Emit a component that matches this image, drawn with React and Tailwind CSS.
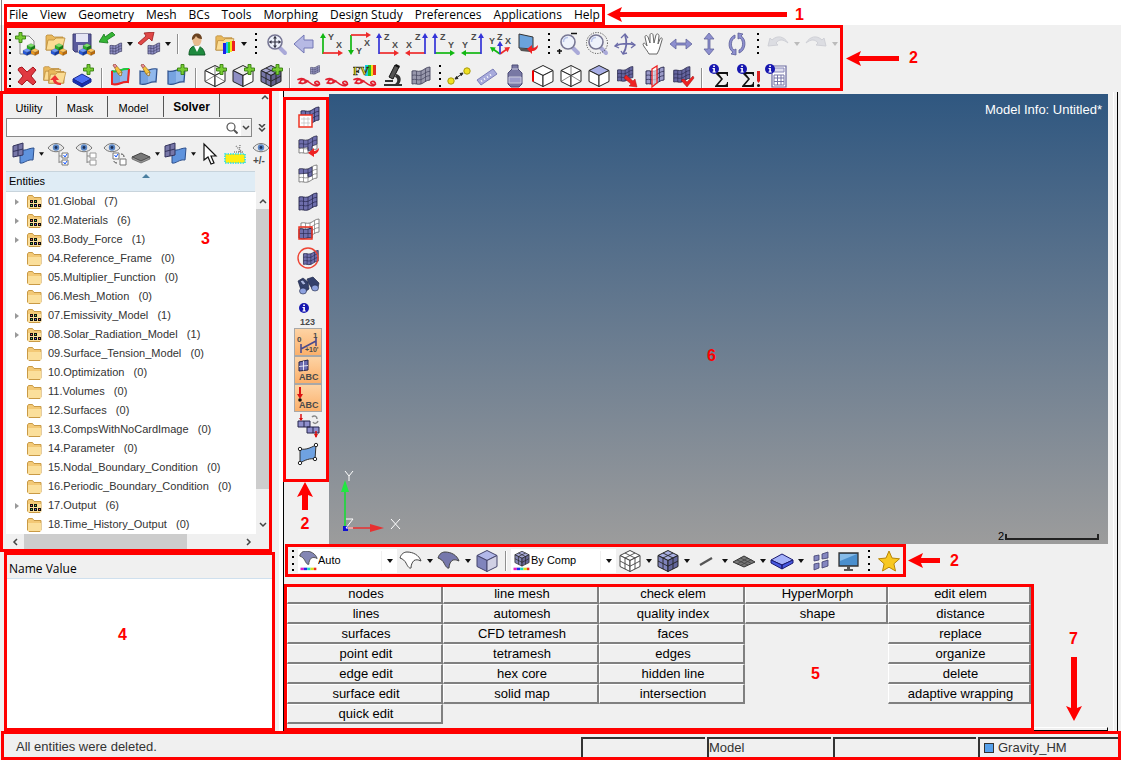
import React, { useState } from 'react';
import clsx from 'clsx';

const MENUS = ['File', 'View', 'Geometry', 'Mesh', 'BCs', 'Tools', 'Morphing', 'Design Study', 'Preferences', 'Applications', 'Help'];

const ENTITIES = [
  ['01.Global', 7], ['02.Materials', 6], ['03.Body_Force', 1], ['04.Reference_Frame', 0],
  ['05.Multiplier_Function', 0], ['06.Mesh_Motion', 0], ['07.Emissivity_Model', 1],
  ['08.Solar_Radiation_Model', 1], ['09.Surface_Tension_Model', 0], ['10.Optimization', 0],
  ['11.Volumes', 0], ['12.Surfaces', 0], ['13.CompsWithNoCardImage', 0], ['14.Parameter', 0],
  ['15.Nodal_Boundary_Condition', 0], ['16.Periodic_Boundary_Condition', 0], ['17.Output', 6],
  ['18.Time_History_Output', 0],
];

const PANELS = [
  ['nodes', 'line mesh', 'check elem', 'HyperMorph', 'edit elem'],
  ['lines', 'automesh', 'quality index', 'shape', 'distance'],
  ['surfaces', 'CFD tetramesh', 'faces', '', 'replace'],
  ['point edit', 'tetramesh', 'edges', '', 'organize'],
  ['edge edit', 'hex core', 'hidden line', '', 'delete'],
  ['surface edit', 'solid map', 'intersection', '', 'adaptive wrapping'],
  ['quick edit', '', '', '', ''],
];

const PURPLE = '#8f8fc4';
const DARK = '#25254a';

/* ---------- drawing helpers ---------- */

function Svg({ size = 24, children }) {
  return (
    <svg width={size} height={size} viewBox="0 0 24 24" fill="none" className="shrink-0" aria-hidden="true">
      {children}
    </svg>
  );
}

function Plus({ x = 13, y = 0 }) {
  return (
    <path transform={`translate(${x} ${y})`} d="M4 .5h3V4h3.500v3H7v3.500H4V7H.5V4H4z" fill="#77cc33" stroke="#35800f" strokeWidth=".9" />
  );
}

function Block({ x, y, s = 1, top, side, dark }) {
  return (
    <g transform={`translate(${x} ${y}) scale(${s})`} stroke="#222" strokeOpacity=".35" strokeWidth=".5">
      <path d="M0 2.500 4 .5l4 2-4 2z" fill={top} />
      <path d="M0 2.500v3l4 2v-3z" fill={side} />
      <path d="M8 2.500v3l-4 2v-3z" fill={dark} />
    </g>
  );
}

function Blocks() {
  return (
    <>
      <Block x={12} y={11} top="#7be36a" side="#27b327" dark="#128012" />
      <Block x={8} y={16} top="#6d9bff" side="#2458e0" dark="#123aa5" />
      <Block x={16} y={16} top="#ffc75e" side="#f09a1c" dark="#bf6c08" />
    </>
  );
}

function FolderShape({ x = 0, y = 0, s = 1 }) {
  return (
    <g transform={`translate(${x} ${y}) scale(${s})`} stroke="#b98a3a" strokeWidth=".8">
      <path d="M3 18V4l1-1h5l2 2h9v13z" fill="#e9b95c" />
      <path d="M3 18 5 8h6l2-2h9l-3 12z" fill="#fbdc94" />
    </g>
  );
}

// wavy shell patch with mesh lines over it
function Patch({ x = 0, y = 0, s = 1, fill = PURPLE, line = DARK, grid = true }) {
  return (
    <g transform={`translate(${x} ${y}) scale(${s})`} stroke={line} strokeWidth=".9">
      <path d="M3 7c4-1 5 1 9 0 3-1 5-4 9-4v13c-4 0-6 3-9 4-4 1-5-1-9 0z" fill={fill} />
      {grid && (
        <path d="M3 11.300c4-1 5 1 9 0 3-1 5-4 9-4M3 15.600c4-1 5 1 9 0 3-1 5-4 9-4M7.500 7v13M12 7v13M16.500 4.700v13" strokeWidth=".7" />
      )}
    </g>
  );
}

function Sheet({ lines = '#2c4f8c' }) {
  return (
    <>
      <path d="M3 7c6 2 9-3 17-2l-1 13c-7-1-9 4-16 2z" fill="#76a3e0" stroke={lines} strokeWidth="1.200" />
      <path d="M11 7c3-1 5-2 8-1.500l-1 11c-3 0-5 1-7 2z" fill="#a4c6f2" fillOpacity=".6" />
    </>
  );
}

function Pencil({ x = 0, y = 0 }) {
  return (
    <g transform={`translate(${x} ${y})`} strokeWidth=".6">
      <path d="m4 1 2-1 7 8-1 4-3-2z" fill="#f4c33c" stroke="#8a6210" />
      <path d="m4 1 2-1 2 2-2 2z" fill="#ea8f9a" stroke="#a0505a" />
      <path d="m9 10 4-2-1 4z" fill="#f6e3c0" stroke="#8a6210" />
    </g>
  );
}

function IsoBox({ left = '#fff', right = '#fff', top = '#fff', grid, inner, redEdge, line = '#222' }) {
  return (
    <g stroke={line} strokeWidth="1" strokeLinejoin="round">
      <path d="m12 1.500 10 5-10 5-10-5z" fill={top} />
      <path d="m2 6.500 10 5v11l-10-5z" fill={left} />
      <path d="m22 6.500-10 5v11l10-5z" fill={right} />
      {inner && <path d="M12 1.500v10M2 17.500l10-6 10 6" strokeWidth=".7" stroke="#555" />}
      {grid && (
        <path d="M7 9v11M17 9v11M2 12l10 5.200L22 12M7 4l10 5M17 4 7 9" strokeWidth=".9" />
      )}
      {redEdge && <path d="M2 6.500v11" stroke="#e00" strokeWidth="2" />}
    </g>
  );
}

function Eye({ x = 0, y = 0 }) {
  return (
    <g transform={`translate(${x} ${y})`}>
      <path d="M0 5c4-6 12-6 16 0-4 5-12 5-16 0z" fill="#e6e6e6" stroke="#777" />
      <circle cx="8" cy="4.500" r="3.200" fill="#5a87c6" />
      <circle cx="8" cy="4.500" r="1.400" fill="#1d2f55" />
    </g>
  );
}

function Magnifier({ children }) {
  return (
    <>
      <path d="m15 15 6 6" stroke="#a9a9d8" strokeWidth="4" strokeLinecap="round" />
      <circle cx="11" cy="10" r="7" fill="#eef2fb" stroke="#777794" strokeWidth="1.600" />
      {children || <path d="M6.500 10c0-3 2-4.500 4.500-4.500" stroke="#b9c4ea" strokeWidth="1.500" />}
    </>
  );
}

function Info({ x = 0, y = 0 }) {
  return (
    <g transform={`translate(${x} ${y})`}>
      <circle cx="5" cy="5" r="5" fill="#1717b0" />
      <path d="M4.200 1.500h1.700v1.500H4.200zM3.500 4h2.400v3.500h.8v1H3.500v-1h.8V5h-.8z" fill="#fff" />
    </g>
  );
}

function Letter({ x, y, children, size = 9, color = '#4a4a4a' }) {
  return <text x={x} y={y} fontSize={size} fontWeight="700" fontFamily="Liberation Sans, sans-serif" fill={color}>{children}</text>;
}

function Arrow({ x1, y1, x2, y2, color }) {
  const a = Math.atan2(y2 - y1, x2 - x1);
  const p = (d, w) => `${x2 - d * Math.cos(a) + w * Math.sin(a)} ${y2 - d * Math.sin(a) - w * Math.cos(a)}`;
  return (
    <>
      <path d={`M${x1} ${y1}L${p(4, 0)}`} stroke={color} strokeWidth="1.700" />
      <path d={`M${p(5, 3)}L${x2} ${y2}L${p(5, -3)}z`} fill={color} />
    </>
  );
}

const G = '#12b812';
const R = '#ee2b2b';
const B = '#3434d8';

function Squiggle() {
  return (
    <path d="M1 15.500c5-2 8 0 7 2.500s-6 1.500-4.500-1 6-1 9 1.500 7 4 9 2.500 0-4-2.500-3.500-1 3.500 3.500 3M2 19c4 1 7 0 9-2" stroke="#e01e2e" strokeWidth="1.600" strokeLinecap="round" />
  );
}

function Shell({ fill }) {
  return (
    <path d="M1 9c1-4 4-6 7-6 6 0 12 3 14 9-3-1.500-5-1.500-7-.5-2 2-3 4.500-3 7.500-2 1-4-3-5-5S4 10 1 9z" fill={fill} stroke="#444" strokeWidth="1" />
  );
}

function Spectrum() {
  return (
    <>
      <path d="M3 20h4v3H3z" fill="#e020c0" />
      <path d="M7 20h4v3H7z" fill="#2030e8" />
      <path d="M11 20h4v3h-4z" fill="#20d8c0" />
      <path d="M15 20h4v3h-4z" fill="#d8e020" />
      <path d="M19 20h3v3h-3z" fill="#f03020" />
    </>
  );
}

/* ---------- icons by name ---------- */

const ICONS = {
  newModel: <><path d="M5 4h9l5 5v13H5z" fill="#f6f6f6" stroke="#888" /><Plus x={0} y={0} /><Blocks /></>,
  open: <><FolderShape /><Blocks /></>,
  save: <><path d="M2 2h18v18H4l-2-2z" fill="#5a5a9c" stroke="#3c3c70" /><path d="M5 2h12v8H5z" fill="#e4e4f4" /><path d="M7 13h9v7H7z" fill="#c9c9e0" /><Blocks /></>,
  importFile: <><Patch x={9} y={9} s={0.65} /><path d="M13 0 6 5 5 2 0 10l9 1-1-3 8-5z" fill="#35b535" stroke="#17781a" strokeWidth=".8" /></>,
  exportFile: <><Patch x={9} y={9} s={0.65} /><path d="m1 11 8-7-2-3 10-1-2 9-3-3-8 7z" fill="#e04848" stroke="#9b1c1c" strokeWidth=".8" /></>,
  user: <><path d="M4 23c0-7 3-9 7-9s8 2 9 9z" fill="#1e8a3e" stroke="#0f5c26" /><path d="m9 14 3 6 3-6z" fill="#fff" /><ellipse cx="12" cy="8" rx="4.500" ry="6" fill="#e8bb8e" /><path d="M7 8c-1-8 10-9 10-1-3 0-5-1-6-3-1 2-2 3-4 4z" fill="#6a4220" /></>,
  results: <><FolderShape y={1} s={0.95} /><path d="M10 11h3v11h-3z" fill="#2020e8" /><path d="M13 10h2v11h-2z" fill="#18c8e8" /><path d="M15 10h2v11h-2z" fill="#2fd42f" /><path d="M17 9h2v11h-2z" fill="#f3e51e" /><path d="M19 9h3v10h-3z" fill="#ee2020" /></>,
  fit: <Magnifier><path d="M11 4.500v11M5.500 10h11" stroke="#334" strokeWidth="1.200" /><path d="m11 4-2 2.500h4zM11 16l-2-2.500h4zM5 10l2.500-2v4zM17 10l-2.500-2v4z" fill="#334" /></Magnifier>,
  back: <path d="M2 12 12 3v5h9v8h-9v5z" fill="#b6b9e4" stroke="#7377b4" />,
  xy: <><Arrow x1={3} y1={22} x2={3} y2={1} color={G} /><Arrow x1={3} y1={21} x2={23} y2={21} color={R} /><Letter x={8} y={8}>Y</Letter><Letter x={16} y={16}>X</Letter></>,
  yx: <><Arrow x1={3} y1={3} x2={3} y2={23} color={G} /><Arrow x1={3} y1={3} x2={23} y2={3} color={R} /><Letter x={8} y={22}>Y</Letter><Letter x={16} y={14}>X</Letter></>,
  xz: <><Arrow x1={3} y1={21} x2={23} y2={21} color={R} /><Arrow x1={3} y1={22} x2={3} y2={1} color={B} /><Letter x={8} y={8}>Z</Letter><Letter x={16} y={16}>X</Letter></>,
  zx: <><Arrow x1={21} y1={21} x2={1} y2={21} color={R} /><Arrow x1={21} y1={22} x2={21} y2={1} color={B} /><Letter x={11} y={8}>Z</Letter><Letter x={2} y={16}>X</Letter></>,
  yz: <><Arrow x1={3} y1={21} x2={23} y2={21} color={G} /><Arrow x1={3} y1={22} x2={3} y2={1} color={B} /><Letter x={8} y={8}>Z</Letter><Letter x={16} y={16}>Y</Letter></>,
  zy: <><Arrow x1={21} y1={21} x2={1} y2={21} color={G} /><Arrow x1={21} y1={22} x2={21} y2={1} color={B} /><Letter x={11} y={8}>Z</Letter><Letter x={2} y={16}>Y</Letter></>,
  iso: <><Arrow x1={12} y1={22} x2={2} y2={15} color={G} /><Arrow x1={12} y1={22} x2={22} y2={15} color={R} /><Arrow x1={12} y1={22} x2={12} y2={9} color={B} /><Letter x={1} y={12}>Y</Letter><Letter x={9} y={8}>Z</Letter><Letter x={17} y={12}>X</Letter></>,
  userView: <><path d="m3 2 14 3v12L3 16z" fill="#6ba3dc" stroke="#333" /><path d="m3 16 14 1-3 3-9-1z" fill="#555" /><path d="M22 13c0 4-3 6-6 6v3l-5-5 5-4v3c3 0 4-1 6-3z" fill="#e22" /></>,
  zoomOut: <><Magnifier /><path d="M14 1.500h6M0 19h5M2.500 17v5" stroke="#111" strokeWidth="1.500" /></>,
  zoomBox: <><Magnifier /><circle cx="12" cy="11" r="10.500" stroke="#333" strokeDasharray="1 1.500" /></>,
  rotate: <g stroke="#6b6ba8" strokeWidth="1.800"><path d="M2 14c6-3 13-3 20-1M10 22c4-6 4-13 2-19" /><path d="m8 6 4-4 3 4M18 10l4 3-4 3M5 11l-3 3 4 2M8 19l2 3 4-1" strokeWidth="1.300" /></g>,
  pan: <path d="M8 22c-2-4-6-8-6-10 1-2 3 0 4 2L4 5c0-2 2-2 3 0l2 6V3c0-2 3-2 3 0l1 8 2-8c1-2 3-1 3 1l-1 8 2-5c1-2 3-1 2 1l-3 10-2 4z" fill="#fff" stroke="#666" />,
  horiz: <path d="m1 12 6-5v4h10V7l6 5-6 5v-4H7v4z" fill="#8d8fcf" stroke="#62649c" strokeWidth=".8" />,
  vert: <path d="m12 1 5 6h-4v10h4l-5 6-5-6h4V7H7z" fill="#8d8fcf" stroke="#62649c" strokeWidth=".8" />,
  spin: <g fill="#8d8fcf" stroke="#5c5e98" strokeWidth=".8"><path d="M10 3C3 5 2 17 8 20l-2 2 5 1V17l-2 1C5 15 6 7 10 6z" /><path d="M14 21c7-2 8-14 2-17l2-2-5-1v6l2-1c4 3 3 11-1 12z" /></g>,
  undo: <path d="M2 14 4 6l2 2c5-5 12-4 16 3-5-4-9-4-12 0l2 2z" fill="#dcdde2" stroke="#cfd0d6" />,
  redo: <path d="M22 14 20 6l-2 2C13 3 6 4 2 11c5-4 9-4 12 0l-2 2z" fill="#dcdde2" stroke="#cfd0d6" />,

  remove: <path d="m4 4 3-1 5 5 6-5 3 3-5 6 5 6-3 3-6-5-5 5-4-3 5-6-5-6z" fill="#e03a42" stroke="#a8161f" />,
  move: <><FolderShape x={-2} s={0.9} /><FolderShape x={3} y={3} s={0.9} /><path d="M18 21c-5 0-8-2-8-5H7l5-5 4 5h-3c0 1 2 3 5 3z" fill="#e33" /></>,
  component: <><path d="m2 15 9-5 9 5-9 5z" fill="#4a6cf4" stroke="#1a2a90" /><path d="M2 15v3l9 5v-3zM20 15v3l-9 5v-3z" fill="#1630b8" stroke="#1a2a90" /><Plus x={12} y={0} /></>,
  editEdge: <><Sheet /><path d="M3 7c6 2 9-3 17-2" stroke="#1ccc3a" strokeWidth="2" /><path d="M3 7v13c7 2 9-3 16-2l1-13" stroke="#e22" strokeWidth="2" /><Pencil /></>,
  editSurf: <><Sheet /><Pencil /></>,
  addSurf: <><Sheet /><Plus x={12} y={0} /></>,
  solidWire: <><IsoBox inner /><Plus x={13} y={0} /></>,
  solidHalf: <><IsoBox left={PURPLE} top="#eee" /><Plus x={13} y={0} /></>,
  solidMesh: <><IsoBox left="#7777a8" right="#62628c" top="#a6a6d0" grid /><Plus x={13} y={0} /></>,
  fvMesh: <><Patch x={12} y={0} s={0.5} fill="#9a9ac4" /><Squiggle /></>,
  fvClear: <Squiggle />,
  fvPlot: <><path d="M12 1h3v11h-3z" fill="#15d0e0" /><path d="M15 1h3v11h-3z" fill="#22c022" /><path d="M18 1h2v11h-2z" fill="#f0e020" /><path d="M20 1h3v10h-3z" fill="#e83020" /><text x="0" y="11" fontSize="12" fontWeight="700" fontFamily="Liberation Serif, serif" fill="#f4ea10" stroke="#222" strokeWidth=".6">FV</text><Squiggle /></>,
  microscope: <><path d="M3 22h18v-2h-3c3-4 2-9-3-10l-1 3c3 1 3 5 0 7H3zM4 16h8v2H4z" fill="#333" /><path d="m14 1 4 2-6 12-4-2z" fill="#555" stroke="#111" /><path d="m15 0 4 2-1 2-4-2z" fill="#111" /></>,
  mesh: <Patch fill="#9898ac" line="#44445c" />,
  distance: <><circle cx="4" cy="17" r="3.200" fill="#f0e020" stroke="#a89a10" /><circle cx="20" cy="7" r="3.200" fill="#f0e020" stroke="#a89a10" /><path d="m9 14 6-4M8 15l3-.5-1.500-2zM16 9l-3 .5 1.500 2z" stroke="#222" fill="#222" /></>,
  ruler: <><path d="M2 16 18 5l4 5L6 21z" fill="#a8abdc" stroke="#7a7db8" /><path d="m6 16 1 2m2-4 1 2m2-4 1 2m2-4 1 2" stroke="#fff" /></>,
  mass: <><path d="M9 1h6v4l4 4v11l-3 3H8l-3-3V9l4-4z" fill="#7878a4" stroke="#4a4a74" /><path d="M9 5h6M6 13h12v6H6z" stroke="#ccd" fill="#9a9ac8" /></>,
  edgeView: <IsoBox redEdge />,
  wireView: <IsoBox inner />,
  topView: <IsoBox top="#a8aee6" />,
  meshMove: <><Patch s={0.85} fill="#6666a0" /><path d="m11 11 7 6 2-2 2 8-8-1 2-2-7-6z" fill="#e22" stroke="#a11" strokeWidth=".5" /></>,
  meshCut: <><Patch fill="#9a9ac8" /><path d="M9 5l5-3v17l-5 4z" fill="#fff" fillOpacity=".6" stroke="#e22" strokeWidth="1.300" /></>,
  meshCheck: <><Patch s={0.9} fill="#6666a0" /><path d="m10 16 3-1 3 3 6-6 1 2-7 9z" fill="#e22" stroke="#911" strokeWidth=".5" /></>,
  sum: <><path d="M6 8h13v4h-1c0-2-1-2-3-2h-5l4 5-5 6h6c2 0 3-1 3-3h1v5H6v-1l6-7-6-6z" fill="#111" /><Info /></>,
  sumAlert: <><path d="M5 8h12v4h-1c0-2-1-2-3-2H9l4 5-5 6h5c2 0 3-1 3-3h1v5H5v-1l6-7-6-6z" fill="#111" /><Info /><path d="M20 7h3v10l-1.500 2L20 17z" fill="#d22" /><circle cx="21.500" cy="21.500" r="1.500" fill="#111" /></>,
  calc: <><path d="M7 2h14v21H7z" fill="#fff" stroke="#6a6aa0" strokeWidth="1.200" /><path d="M9 4h10v4H9z" fill="#dde" stroke="#8888b8" /><path d="M9 11h10v10H9zM9 14h10M9 17.500h10M12.500 11v10M16 11v10" stroke="#7777a8" /><Info /></>,

  maskBox: <><Patch x={2} y={-2} fill="#6e6eac" /><path d="M3 9h13v12H3z" fill="#fff" stroke="#e32" strokeWidth="1.500" /><path d="M5 13h9M5 17h9M8 11v9M12 11v9" stroke="#bbb" strokeWidth=".7" /></>,
  maskReverse: <><Patch y={-1} fill="#fff" line="#777" /><path d="M3 6c4-1 5 1 9 0 3-1 5-4 9-4v8l-5 2v4l-4 1v-4l-9 1z" fill="#6e6eac" stroke={DARK} strokeWidth=".6" /><path d="M3 10c4-1 5 1 9 0 3-1 5-4 9-4M7.500 6v7M12 6v10M16.500 4v8" stroke={DARK} strokeWidth=".6" /><path d="M23 14c0 4-3 6-5 6v3l-6-4 6-5v3c2 0 3-1 5-3z" fill="#e22" /></>,
  maskAdj: <><Patch fill="#fff" line="#777" /><path d="M3 7c4-1 5 1 9 0l4-2v9l-4 1v-4l-9 1z" fill="#6e6eac" stroke={DARK} strokeWidth=".6" /><path d="M7.500 7v5M12 7v7M12 11l4-1.500" stroke={DARK} strokeWidth=".6" /></>,
  unmaskAll: <Patch fill="#6e6eac" />,
  unmaskBox: <><Patch x={2} y={-2} fill="#fff" line="#777" /><path d="M3 11c4-1 5 1 9 0l4-1v10c-5-1-8 2-13 0z" fill="#6e6eac" stroke={DARK} /><path d="M7.500 11v9M12 11v9M3 15.500h13" stroke={DARK} strokeWidth=".6" /><path d="M3 9h13v12H3z" stroke="#e32" strokeWidth="1.500" /></>,
  spherical: <><Patch x={5} y={2} s={0.82} fill="#6e6eac" /><circle cx="12" cy="12" r="10" stroke="#e43" strokeWidth="1.400" /></>,
  find: <g fill="#33406c" stroke="#182040" strokeWidth=".6"><path d="m2 7 5-3 5 4 1 7-4 3-4-2z" /><path d="m11 5 6-2 6 6-1 5-5 2-4-6z" /><ellipse cx="7" cy="17" rx="3.500" ry="3" fill="#8ea2e0" /><ellipse cx="19" cy="14" rx="3.500" ry="3" fill="#8ea2e0" /><path d="m4 7 3-1 3 4-3 1z" fill="#a9b5df" /></g>,
  numbers: <><Info x={3} y={1} /><Letter x={4} y={23} size={9}>123</Letter></>,
  scale: <><path d="M5 14v9M20 7v9M5 19l15-8" stroke="#4a4a8c" strokeWidth="1.600" /><Letter x={1} y={12} size={8}>0</Letter><Letter x={17} y={8} size={8}>1</Letter><Letter x={9} y={22} size={7}>+10'</Letter></>,
  labelElem: <><path d="m3 4 9-2v10l-9 1z" fill="#6c6cb0" stroke={DARK} /><path d="M7.500 3v9.500M3 8.500l9-1" stroke="#fff" strokeWidth=".8" /><Letter x={3} y={22} size={9}>ABC</Letter></>,
  labelLoad: <><path d="M4 1v8" stroke="#d11" strokeWidth="2" /><path d="M1 8h6l-3 5z" fill="#d11" /><circle cx="4" cy="14" r="1.800" fill="#111" /><Letter x={3} y={22} size={9}>ABC</Letter></>,
  loads: <><path d="M2 7h12v6H2zM11 13h12v6H11z" fill="#8f8fcc" stroke={DARK} /><path d="M8 7v6M17 13v6" stroke={DARK} /><path d="M5 0v6M20 17v6" stroke="#d11" strokeWidth="1.500" /><path d="M3 4h4L5 7zM18 20h4l-2 4z" fill="#d11" /><path d="M16 3c2-2 5-1 5 2M22 7c-1 3-4 3-5 1" stroke="#888" strokeWidth="1.500" /></>,
  surfPoints: <><path d="M4 7c6 1 10-1 16-4l-1 14c-5-1-10 1-15 4z" fill="#6fa2e2" stroke="#333" /><g fill="#fff" stroke="#222"><circle cx="4" cy="7" r="1.700" /><circle cx="20" cy="3" r="1.700" /><circle cx="19" cy="17" r="1.700" /><circle cx="4" cy="21" r="1.700" /></g></>,

  shellMesh: <><path d="M9 7c5 3 8-1 14-1l-1 12c-6-1-9 4-13 3z" fill="#5f93dd" stroke="#2c4f8c" /><path d="m2 4 10-3v12L2 15z" fill="#7777a8" stroke="#33335c" /><path d="M7 2.500V14M2 9.500l10-2.500" stroke="#33335c" /></>,
  eyeChecks: <><Eye x={1} y={1} /><path d="M12 10v11M12 14h3M12 20h3" stroke="#888" /><path d="M15 11h6v5h-6zM15 18h6v5h-6z" fill="#fff" stroke="#777" /><path d="m16.500 13 1.500 2 2-3M16.500 20l1.500 2 2-3" stroke="#15f" /></>,
  eyeTree: <><Eye x={1} y={1} /><path d="M12 10v11M12 14h3M12 20h3" stroke="#888" /><path d="M15 11h6v5h-6zM15 18h6v5h-6z" fill="#fff" stroke="#999" /></>,
  eyeSwap: <><Eye x={1} y={1} /><path d="M10 11h6v6h-6zM17 17h6v6h-6z" fill="#fff" stroke="#777" /><path d="m11.500 13 1.500 2 2-3" stroke="#15f" /><path d="M18 12c2 0 3 1 3 3M14 21c-2 0-3-1-3-2" stroke="#444" /></>,
  plate: <><path d="m3 15 9-4 9 4-9 4z" fill="#777" stroke="#444" /><path d="M3 15v2l9 4 9-4v-2l-9 4z" fill="#999" stroke="#444" strokeWidth=".6" /></>,
  cursor: <path d="M7 2v16l4-3 3 7 3-1-3-7h5z" fill="#fff" stroke="#111" strokeWidth="1.200" />,
  highlight: <><path d="M2 12h20v9H2z" fill="#ffee10" stroke="#29dce8" strokeWidth="1.600" strokeDasharray="1.500 1" /><path d="M13 4l7 7M17 3l-1 8M11 10h9" stroke="#888" strokeWidth="1.500" strokeDasharray="1 1" /></>,
  eyePlus: <><Eye x={4} y={1} /><Letter x={4} y={22} size={10}>+/-</Letter></>,

  shellColor: <><g transform="translate(1 -3)"><Shell fill="#8486b4" /></g><Spectrum /></>,
  cubeColor: <><g transform="translate(3 -1) scale(.85)"><IsoBox left="#8486b4" right="#666692" top="#a5a7d4" grid /></g><Spectrum /></>,
  shellWire: <Shell fill="#fff" />,
  shellFill: <Shell fill="#7678ac" />,
  cubeGlass: <IsoBox left="#8084bc" top="#b2b8ea" right="#d0d0e4" line="#44446c" />,
  cubeWire: <IsoBox grid line="#444" />,
  cubeMesh: <IsoBox grid left="#8084bc" top="#a8aee0" right="#63669c" />,
  bar: <path d="M6 16 18 9" stroke="#555" strokeWidth="2.200" />,
  layer: <><path d="m1 13 11-6 11 6-11 5z" fill="#777" stroke="#333" /><path d="m5 11 11 5M8.500 9l11 5.500M5 15l11-6M8.500 16.500l11-6" stroke="#444" strokeWidth=".8" /></>,
  slab: <><path d="m1 11 11-6 11 6-11 5z" fill="#a5b2fa" stroke="#1a1a70" /><path d="M1 11v3l11 6v-4zM23 11v3l-11 6v-4z" fill="#4658e0" stroke="#1a1a70" /></>,
  split: <g fill="#8486c0" stroke="#3c3c6c" strokeWidth=".8"><path d="m6 7 5-1v5l-5 1zM14 5l6-2v6l-6 1zM6 15l5-1v5l-5 2zM14 13l6-2v6l-6 2z" /></g>,
  monitor: <><path d="M3 4h19v13H3z" fill="#4a8fce" stroke="#333" strokeWidth="1.300" /><path d="M4 5h17L4 12z" fill="#86bbe8" /><path d="M11 17h3v3h3v2H8v-2h3z" fill="#555" /></>,
  star: <path d="m12 2 3 7 7.500.8-5.600 5 1.600 7.200-6.500-3.800L5.500 22l1.600-7.200-5.600-5L9 9z" fill="#f8c820" stroke="#b88608" strokeLinejoin="round" />,
};

/* ---------- toolbar parts ---------- */

function Tool({ name, active, narrow }) {
  return (
    <button
      type="button"
      aria-label={name}
      className={clsx(
        'flex shrink-0 items-center justify-center',
        narrow ? 'w-6' : 'w-7',
        active ? 'h-7 border border-[#a8a8a8] bg-gradient-to-b from-[#fdd3a4] to-[#fbb06a]' : 'h-6'
      )}
    >
      <Svg>{ICONS[name]}</Svg>
    </button>
  );
}

function Caret({ muted, small }) {
  return (
    <svg width={small ? 5 : 6} height="4" viewBox="0 0 6 4" className="pointer-events-none shrink-0" aria-hidden="true">
      <path d="M0 0h6L3 4z" fill={muted ? '#bbb' : '#111'} />
    </svg>
  );
}

function Drop({ narrow, muted }) {
  return (
    <button type="button" aria-label="more" className={clsx('flex h-6 shrink-0 items-center justify-center', narrow ? 'w-2' : 'w-[10px]')}>
      <Caret muted={muted} small={narrow} />
    </button>
  );
}

function Sep() {
  return <span className="mx-1 h-5 w-[2px] shrink-0 border-r border-white bg-[#8f8f8f]" />;
}

function Grip({ start, tight }) {
  return (
    <span className={clsx('flex h-6 shrink-0 flex-col items-center justify-between py-px', start ? 'w-[6px]' : tight ? 'w-[10px]' : 'w-[13px]')}>
      {[0, 1, 2, 3].map((i) => <i key={i} className="h-[2px] w-[2px] bg-black" />)}
    </span>
  );
}

function Tools({ names }) {
  return names.map((n) => <Tool key={n} name={n} />);
}

function PickList({ icon, label, value, wide }) {
  return (
    <label className={clsx('flex h-6 shrink-0 items-center bg-white', wide ? 'w-[105px]' : 'w-[99px]')}>
      <Svg size={20}>{ICONS[icon]}</Svg>
      <select aria-label={label} className="min-w-0 flex-1 appearance-none bg-white text-[11px] text-black" defaultValue={value}>
        <option>{value}</option>
      </select>
      <span className="flex h-5 w-4 items-center justify-center border-l border-[#f0f0f0]"><Caret /></span>
    </label>
  );
}

/* ---------- callouts ---------- */

function Num({ children }) {
  return <span className="block text-[16px] leading-5 font-bold text-[#f00]">{children}</span>;
}

function LeftArrow({ className }) {
  return (
    <span className={clsx('flex h-4 items-center', className)}>
      <svg width="15" height="15" viewBox="0 0 15 15" className="shrink-0" aria-hidden="true"><path d="M0 7.500 15 0l-3 7.500 3 7.500z" fill="#f00" /></svg>
      <i className="-ml-1 h-[5px] flex-1 bg-[#f00]" />
    </span>
  );
}

/* ---------- sections ---------- */

function Header() {
  return (
    <header>
      <div className="flex items-center bg-white pl-px">
        <div className="flex items-center border-l border-[#808080] pt-1 pl-[2px]">
          <nav className="flex h-[21px] items-center gap-3 border-[3px] border-[#f00] px-[2px] font-['Open_Sans',sans-serif] text-[12px]">
            {MENUS.map((m) => <button key={m} type="button" className="leading-4">{m}</button>)}
          </nav>
        </div>
        <div className="flex items-center pt-1">
          <LeftArrow className="mr-2 ml-[2px] w-[180px]" />
          <Num>1</Num>
        </div>
      </div>
      <div className="flex items-center pl-px">
        <div className="border-l border-[#808080] pl-[2px]">
          <div className="w-fit border-[3px] border-[#f00]">
            <div className="flex h-[31px] items-center">
              <Grip start />
              <Tools names={['newModel', 'open', 'save', 'importFile']} />
              <Drop />
              <Tool name="exportFile" />
              <Drop />
              <Sep />
              <Tools names={['user', 'results']} />
              <Drop />
              <Grip />
              <Tools names={['fit', 'back', 'xy', 'yx', 'xz', 'zx', 'yz', 'zy', 'iso', 'userView']} />
              <Grip />
              <Tools names={['zoomOut', 'zoomBox', 'rotate', 'pan', 'horiz', 'vert', 'spin']} />
              <Grip />
              <Tool name="undo" />
              <Drop muted />
              <Tool name="redo" />
              <Drop muted />
            </div>
            <div className="flex h-[29px] items-end">
              <Grip start />
              <Tools names={['remove', 'move', 'component']} />
              <Sep />
              <Tools names={['editEdge', 'editSurf', 'addSurf']} />
              <Sep />
              <Tools names={['solidWire', 'solidHalf', 'solidMesh']} />
              <Sep />
              <Tools names={['fvMesh', 'fvClear', 'fvPlot', 'microscope', 'mesh']} />
              <Grip tight />
              <Tools names={['distance', 'ruler', 'mass', 'edgeView', 'wireView', 'topView', 'meshMove', 'meshCut', 'meshCheck']} />
              <Sep />
              <Tools names={['sum', 'sumAlert', 'calc']} />
            </div>
          </div>
        </div>
        <LeftArrow className="mr-[10px] ml-[3px] w-[53px]" />
        <Num>2</Num>
      </div>
    </header>
  );
}

function FolderIcon({ full }) {
  return (
    <svg width="15" height="14" viewBox="0 0 15 14" className="shrink-0" aria-hidden="true">
      <path d="M.5 12V2l1-1.500h4l1.500 2h7V12l-1 1.500h-11z" fill="#f3c976" stroke="#c99a45" />
      <path d="M1 5h13v8H1z" fill="#fbdf9b" />
      {full && (
        <g fill="#111">
          <path d="M3 5h3v3H3zM7 5h3v3H7zM3 9h3v3H3zM7 9h3v3H7zM11 9h3v3h-3z" />
          <path d="M4 6h1v1H4zM12 10h1v1h-1z" fill="#f55" />
          <path d="M8 6h1v1H8zM4 10h1v1H4z" fill="#5d5" />
          <path d="M8 10h1v1H8z" fill="#66f" />
        </g>
      )}
    </svg>
  );
}

function Chevron({ d }) {
  return (
    <svg width="8" height="8" viewBox="0 0 8 8" fill="none" stroke="#444" strokeWidth="1.500" className="shrink-0" aria-hidden="true">
      <path d={d} />
    </svg>
  );
}

function Browser() {
  const [tab, setTab] = useState('Solver');
  const [query, setQuery] = useState('');
  return (
    <section className="relative w-[272px] overflow-hidden border-[3px] border-[#f00] bg-[#f0f0f0] text-[11px]">
      <div className="flex h-[23px] items-end pl-[3px]">
        {['Utility', 'Mask', 'Model', 'Solver'].map((t) => (
          <button
            key={t}
            type="button"
            onClick={() => setTab(t)}
            className={clsx(
              'border-r border-[#555]',
              t === 'Model' || t === 'Solver' ? 'w-14' : 'w-[51px]',
              tab === t ? 'h-[23px] pt-[3px] text-[12px] font-bold' : 'mt-1 h-[21px] pt-[3px] pr-1'
            )}
          >
            {t}
          </button>
        ))}
        <span className="mb-4 ml-auto"><Chevron d="M1 6l3-3 3 3" /></span>
      </div>
      <div className="mt-px flex items-center pl-[3px]">
        <label className="flex h-[19px] w-[246px] items-center border border-[#888] bg-white">
          <input aria-label="Search" value={query} onChange={(e) => setQuery(e.target.value)} className="h-4 min-w-0 flex-1 px-1 outline-none" />
          <svg width="12" height="12" viewBox="0 0 12 12" fill="none" stroke="#555" strokeWidth="1.200" className="mr-[3px]" aria-hidden="true">
            <circle cx="5" cy="5" r="4" /><path d="m8 8 3.500 3.500" strokeWidth="2" />
          </svg>
          <span className="flex h-4 w-[10px] items-center justify-center bg-[#f0f0f0]"><Chevron d="M1 2l3 3 3-3" /></span>
        </label>
        <span className="ml-[6px]"><Chevron d="M1 0l3 3 3-3M1 4l3 3 3-3" /></span>
      </div>
      <div className="flex h-[34px] items-center pl-[6px]">
        <Tool name="shellMesh" />
        <Drop narrow />
        <Tools names={['eyeChecks', 'eyeTree', 'eyeSwap']} />
        <Tool name="plate" narrow />
        <Drop narrow />
        <Tool name="shellMesh" />
        <Drop narrow />
        <Tool name="cursor" narrow />
        <Tool name="highlight" />
        <Tool name="eyePlus" narrow />
      </div>
      <div className="flex pl-[3px]">
        <div className="flex h-[21px] w-[249px] items-center justify-between border-t border-b border-[#c8d4dc] bg-[#dfecf5] pl-[3px]">
          Entities
          <svg width="8" height="4" viewBox="0 0 8 4" className="mr-[105px] mb-3" aria-hidden="true"><path d="M0 4h8L4 0z" fill="#4a7fa0" /></svg>
        </div>
      </div>
      <div className="flex pl-[3px]">
        <ul className="min-w-0 flex-1 bg-white pl-px text-[#333]">
          {ENTITIES.map(([name, count]) => (
            <li key={name} className="flex h-[19px] items-center">
              <button type="button" aria-label={`expand ${name}`} disabled={!count} className="flex w-5 shrink-0 justify-center">
                {count > 0 && <svg width="4" height="6" viewBox="0 0 4 6" aria-hidden="true"><path d="M0 0l4 3-4 3z" fill="#999" /></svg>}
              </button>
              <FolderIcon full={count > 0} />
              <span className="ml-[6px] whitespace-pre">{name}   ({count})</span>
            </li>
          ))}
        </ul>
        <div className="flex w-[13px] flex-col items-center justify-between bg-[#f0f0f0] py-[5px]">
          <Chevron d="M1 6l3-3 3 3" />
          <span className="mt-1 mb-8 w-full flex-1 bg-[#cdcdcd]" />
          <Chevron d="M1 2l3 3 3-3" />
        </div>
      </div>
      <div className="flex h-[15px] items-center pl-2">
        <Chevron d="M6 1 3 4l3 3" />
        <span className="mr-auto ml-[5px] h-[15px] w-[163px] bg-[#cdcdcd]" />
        <span className="mr-4"><Chevron d="M2 1l3 3-3 3" /></span>
      </div>
      <span className="absolute top-[135px] left-[198px]"><Num>3</Num></span>
    </section>
  );
}

function EntityEditor() {
  return (
    <section className="relative ml-1 flex flex-1 flex-col border-[3px] border-[#f00] bg-white">
      <div className="flex h-6 items-end border-b border-[#cfe0ee] bg-[#f0f0f0] pl-[2px] font-['Open_Sans',sans-serif] text-[12px]">
        Name Value
      </div>
      <span className="absolute top-[70px] left-[111px]"><Num>4</Num></span>
    </section>
  );
}

function SideTools() {
  return (
    <div className="relative -ml-px w-[46px] shrink-0 self-start pt-[3px]">
      <div className="flex flex-col items-center border-[3px] border-[#f00] bg-[#f0f0f0] pt-1 pb-[11px] pl-1">
        {['maskBox', 'maskReverse', 'maskAdj', 'unmaskAll', 'unmaskBox', 'spherical', 'find', 'numbers', 'scale', 'labelElem', 'labelLoad', 'loads', 'surfPoints'].map((n) => (
          <div key={n} className="flex h-7 items-center">
            <Tool name={n} active={['scale', 'labelElem', 'labelLoad'].includes(n)} />
          </div>
        ))}
      </div>
      <div className="absolute top-full left-[14px] flex flex-col items-center">
        <svg width="16" height="28" viewBox="0 0 16 28" aria-hidden="true"><path d="M8 0l8 15-5-2v15H5V13l-5 2z" fill="#f00" /></svg>
        <span className="mt-1"><Num>2</Num></span>
      </div>
    </div>
  );
}

function Viewport() {
  return (
    <div className="relative flex min-w-0 flex-1 flex-col bg-gradient-to-b from-[#2f5780] to-[#9c9c9c] text-[13px]">
      <p className="pt-2 pr-[6px] text-right leading-4 text-white">Model Info: Untitled*</p>
      <span className="absolute top-[56%] left-[48%] pl-1"><Num>6</Num></span>
      <div className="mt-auto flex items-end justify-between pr-[9px] pl-2">
        <svg width="66" height="80" viewBox="0 0 66 80" fill="none" className="mb-[6px]" aria-hidden="true">
          <path d="M8 70V30" stroke="#10e030" strokeWidth="1.500" /><path d="M4 34l4-12 4 12z" fill="#20e840" />
          <path d="M8 70h30" stroke="#e83030" strokeWidth="1.500" /><path d="M33 66l14 4-14 4z" fill="#e83030" />
          <path d="M6 68h5v5H6z" fill="#1010d0" />
          <path d="M8 13l4 5 4-5M12 18v5M54 61l9 10M63 61l-9 10M9 61h7l-7 9h7" stroke="#fff" />
        </svg>
        <div className="flex items-end text-[11px] leading-4 text-black">
          2
          <i className="mb-1 ml-px h-[6px] w-[94px] border-r-2 border-b-2 border-l-2 border-[#222]" />
        </div>
      </div>
    </div>
  );
}

function DisplayTools() {
  return (
    <div className="flex items-center">
      <div className="ml-px flex h-[33px] w-fit items-center border-[3px] border-[#f00]">
        <Grip tight />
        <PickList icon="shellColor" label="Color mode" value="Auto" />
        <Tool name="shellWire" /><Drop />
        <Tool name="shellFill" /><Drop />
        <Tool name="cubeGlass" />
        <Sep />
        <PickList icon="cubeColor" label="Element color" value="By Comp" wide />
        <Tool name="cubeWire" /><Drop />
        <Tool name="cubeMesh" /><Drop />
        <Tool name="bar" /><Drop />
        <Tool name="layer" /><Drop />
        <Tool name="slab" /><Drop />
        <Tools names={['split', 'monitor']} />
        <Grip />
        <Tool name="star" />
      </div>
      <LeftArrow className="mr-[10px] ml-[2px] w-8" />
      <Num>2</Num>
    </div>
  );
}

function MainMenu() {
  return (
    <div className="mt-[7px] flex">
      <div className="relative h-[147px] w-[750px] overflow-hidden border-[3px] border-[#f00]">
        <div className="-mt-[3px] grid grid-cols-[156fr_156fr_146fr_143fr_143fr] text-[13px]">
          {PANELS.flat().map((p, i) =>
            p ? (
              <button key={p} type="button" className="h-5 border-t border-r-2 border-b-2 border-l border-t-white border-r-[#808080] border-b-[#808080] border-l-white pl-[3px] leading-4">
                {p}
              </button>
            ) : <span key={i} />
          )}
        </div>
        <span className="absolute top-[77px] left-[524px]"><Num>5</Num></span>
      </div>
      <div className="flex flex-1 flex-col items-center pt-[45px]">
        <Num>7</Num>
        <svg width="16" height="64" viewBox="0 0 16 64" className="mt-2" aria-hidden="true"><path d="M5 0h6v51l5-2-8 15-8-15 5 2z" fill="#f00" /></svg>
        <i className="mt-auto mr-[5px] h-1 self-stretch border-t border-r border-b border-t-white border-r-black border-b-black" />
      </div>
    </div>
  );
}

function StatusBar() {
  const cell = 'flex h-5 items-center border-t-2 border-l-2 border-[#333] text-[#333]';
  return (
    <footer className="ml-px flex h-[29px] items-end border-[3px] border-[#f00] text-[13px]">
      <p className="flex-1 pl-3 leading-5 text-[#333]">All entities were deleted.</p>
      <div className={clsx(cell, 'mr-[2px] w-[124px]')} />
      <div className={clsx(cell, 'mr-[2px] w-[124px]')}>Model</div>
      <div className={clsx(cell, 'mr-[2px] w-[143px]')} />
      <div className={clsx(cell, 'w-[140px] pl-1')}>
        <i className="mr-1 h-[10px] w-[10px] border border-[#333] bg-[#56a0ea]" />
        Gravity_HM
      </div>
    </footer>
  );
}

export default function App() {
  return (
    <div className="flex min-h-screen flex-col bg-[#f0f0f0] font-['Liberation_Sans',Arial,sans-serif] text-black">
      <Header />
      <main className="flex flex-1">
        <div className="flex w-[275px] shrink-0 flex-col">
          <Browser />
          <EntityEditor />
        </div>
        <div className="w-2 border-r-4 border-white" />
        <div className="flex min-w-0 flex-1 flex-col border-l border-black pt-[3px]">
          <div className="flex flex-1">
            <SideTools />
            <Viewport />
            <div className="w-[5px] shrink-0" />
          </div>
          <DisplayTools />
          <MainMenu />
        </div>
        <div className="mt-px mr-[3px] w-[5px] shrink-0 border-r border-l border-r-black border-l-white" />
      </main>
      <StatusBar />
    </div>
  );
}
